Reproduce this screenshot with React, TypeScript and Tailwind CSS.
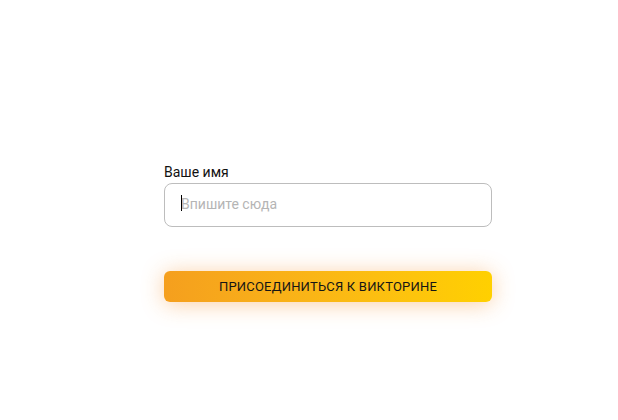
import { useEffect, useRef } from "react";

export default function App() {
  const inputRef = useRef<HTMLInputElement>(null);

  useEffect(() => {
    inputRef.current?.focus();
  }, []);

  return (
    <div className="min-h-[420px] w-full bg-white font-['Roboto',sans-serif]">
      <div className="ml-[164px] w-[328px] pt-[162px]">
        {/* Name field */}
        <label className="block text-[14px] leading-[20px] text-[#111]">
          Ваше имя
        </label>
        <div className="relative mt-[1px]">
          <input
            ref={inputRef}
            autoFocus
            type="text"
            placeholder="Впишите сюда"
            className="block h-[44px] w-full rounded-[8px] border border-[#bdbdbd] px-[16px] pb-[2px] text-[14px] text-[#222] outline-none placeholder:text-[#b5b5b5] caret-transparent"
          />
          {/* text caret */}
          <span className="pointer-events-none absolute left-[17px] top-[12px] h-[16px] w-px bg-black" />
        </div>

        {/* Join button */}
        <button
          className="mt-[44px] block h-[31px] w-full rounded-[6px]
          bg-gradient-to-r from-[#f59f1e] to-[#ffd000]
          text-[13px] uppercase tracking-[0.2px] text-[#151515]
          shadow-[0px_2px_22px_rgba(245,140,40,0.42)]"
        >
          Присоединиться к викторине
        </button>
      </div>
    </div>
  );
}
